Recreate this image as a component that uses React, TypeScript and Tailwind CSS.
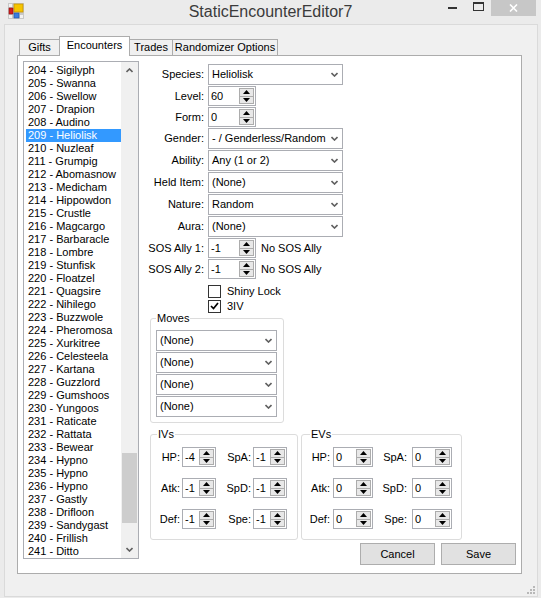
const species = [
  'Sigilyph', 'Swanna', 'Swellow', 'Drapion', 'Audino', 'Heliolisk', 'Nuzleaf', 'Grumpig',
  'Abomasnow', 'Medicham', 'Hippowdon', 'Crustle', 'Magcargo', 'Barbaracle', 'Lombre',
  'Stunfisk', 'Floatzel', 'Quagsire', 'Nihilego', 'Buzzwole', 'Pheromosa', 'Xurkitree',
  'Celesteela', 'Kartana', 'Guzzlord', 'Gumshoos', 'Yungoos', 'Raticate', 'Rattata',
  'Bewear', 'Hypno', 'Hypno', 'Hypno', 'Gastly', 'Drifloon', 'Sandygast', 'Frillish', 'Ditto',
];

function Chevron({ up = false }: { up?: boolean }) {
  return (
    <svg width="7" height="5" viewBox="0 0 7 5">
      <polyline
        points={up ? '0.5,4 3.5,1 6.5,4' : '0.5,1 3.5,4 6.5,1'}
        fill="none"
        stroke="#606060"
        strokeWidth="1.6"
      />
    </svg>
  );
}

function Spinner() {
  return (
    <div className="flex h-full w-[15px] flex-col border border-[#acacac] bg-[#e8e8e8]">
      <div className="flex flex-1 items-center justify-center border-b border-[#acacac]">
        <svg width="7" height="4" viewBox="0 0 7 4">
          <path d="M3.5 0 L7 4 L0 4 Z" fill="#000" />
        </svg>
      </div>
      <div className="flex flex-1 items-center justify-center">
        <svg width="7" height="4" viewBox="0 0 7 4">
          <path d="M0 0 L7 0 L3.5 4 Z" fill="#000" />
        </svg>
      </div>
    </div>
  );
}

function NumBox({ value, w }: { value: string; w: string }) {
  return (
    <div className={`flex h-[20px] ${w} border border-[#abadb3] bg-white`}>
      <span className="flex-1 pl-[2px] leading-[18px]">{value}</span>
      <div className="py-[1px] pr-[1px]">
        <Spinner />
      </div>
    </div>
  );
}

function Combo({ text, w = 'w-[135px]' }: { text: string; w?: string }) {
  return (
    <div className={`flex h-[21px] ${w} items-center border border-[#abadb3] bg-white pl-[3px] pr-[4px]`}>
      <span className="flex-1 whitespace-nowrap">{text}</span>
      <Chevron />
    </div>
  );
}

function Field({ label, h = 'h-[22px]', children }: { label: string; h?: string; children: React.ReactNode }) {
  return (
    <div className={`flex ${h} items-start`}>
      <div className="flex w-[58px] shrink-0 justify-end whitespace-nowrap pr-[4px] leading-[21px]">
        <span>{label}</span>
      </div>
      {children}
    </div>
  );
}

function Check({ label, checked }: { label: string; checked: boolean }) {
  return (
    <div className="flex h-[14px] items-center pl-[58px]">
      <div className="flex h-[13px] w-[13px] items-center justify-center border border-[#333] bg-white">
        {checked && (
          <svg width="9" height="8" viewBox="0 0 9 8">
            <path d="M1 4 L3.5 6.5 L8 1" fill="none" stroke="#000" strokeWidth="1.7" />
          </svg>
        )}
      </div>
      <span className="ml-[6px]">{label}</span>
    </div>
  );
}

function Stat({ label, value, lw, bw, pr }: { label: string; value: string; lw: string; bw: string; pr: string }) {
  return (
    <div className="flex items-center">
      <span className={`${lw} ${pr} text-right`}>{label}</span>
      <NumBox value={value} w={bw} />
    </div>
  );
}

function StatGroup({ title, values, kind }: { title: string; values: string[]; kind: 'iv' | 'ev' }) {
  const iv = kind === 'iv';
  const bw = iv ? 'w-[34px]' : 'w-[40px]';
  const l1 = 'w-[31px]';
  const l2 = iv ? 'w-[37px]' : 'w-[39px]';
  const p1 = iv ? 'pr-[2px]' : 'pr-[3px]';
  const p2 = iv ? 'pr-[2px]' : 'pr-[5px]';
  const rows = [
    ['HP:', 'SpA:'],
    ['Atk:', 'SpD:'],
    ['Def:', 'Spe:'],
  ];
  return (
    <fieldset
      className={`rounded-[3px] border border-[#dcdcdc] pt-[6px] pb-[10px] ${iv ? 'w-[148px] pr-[10px]' : 'ml-[3px] w-[161px] pr-[8px]'}`}
    >
      <legend className={`px-[1px] leading-[13px] ${iv ? 'ml-[6px]' : 'ml-[8px]'}`}>{title}</legend>
      <div className="flex flex-col gap-[11px]">
        {rows.map((r, i) => (
          <div key={i} className="flex">
            <Stat label={r[0]} value={values[i * 2]} lw={l1} bw={bw} pr={p1} />
            <Stat label={r[1]} value={values[i * 2 + 1]} lw={l2} bw={bw} pr={p2} />
          </div>
        ))}
      </div>
    </fieldset>
  );
}

function ListBox() {
  return (
    <div className="ml-[5px] mt-[5px] flex h-[498px] w-[116px] border border-[#abadb3] bg-white">
      <div className="flex-1 overflow-hidden pl-[2px] pt-[2px]">
        {species.map((name, i) => {
          const selected = i === 5;
          return (
            <div
              key={i}
              className={`h-[13px] whitespace-nowrap pl-[2px] leading-[13px] ${selected ? 'bg-[#3399ff] text-white' : ''}`}
            >
              {204 + i} - {name}
            </div>
          );
        })}
      </div>
      <div className="flex w-[17px] flex-col bg-[#f0f0f0]">
        <div className="flex h-[17px] items-center justify-center">
          <Chevron up />
        </div>
        <div className="flex-1 px-[1px]">
          <div className="mt-[374px] h-[70px] bg-[#cdcdcd]" />
        </div>
        <div className="flex h-[17px] items-center justify-center">
          <Chevron />
        </div>
      </div>
    </div>
  );
}

function TitleBar() {
  return (
    <div className="grid h-[24px] grid-cols-[1fr_auto_1fr]">
      <div className="pl-[8px] pt-[3px]">
        <svg width="16" height="16" viewBox="0 0 16 16">
          <rect x="0" y="0" width="16" height="16" fill="#c8c8c8" />
          <rect x="1" y="1" width="3" height="3" fill="#f2f2f2" />
          <rect x="1" y="12" width="3" height="3" fill="#f2f2f2" />
          <rect x="12" y="12" width="3" height="3" fill="#f2f2f2" />
          <rect x="6" y="1" width="9" height="8" fill="#f5c400" stroke="#c89400" strokeWidth="0.8" />
          <rect x="1" y="5" width="4" height="6" fill="#d21f1f" stroke="#8c1010" strokeWidth="0.6" />
          <rect x="6" y="10" width="5" height="5" fill="#3a7de0" stroke="#1d4fa0" strokeWidth="0.6" />
        </svg>
      </div>
      <div className="pt-[2px] text-[16px] leading-[20px] text-[#3b3b3b]">StaticEncounterEditor7</div>
      <div className="flex justify-end pr-[5px]">
        <div className="flex h-[16px] w-[26px] items-start justify-center pt-[7px]">
          <div className="h-[2px] w-[9px] bg-[#333]" />
        </div>
        <div className="flex h-[16px] w-[26px] items-start justify-center pt-[2px]">
          <div className="h-[9px] w-[11px] border border-t-2 border-[#333]" />
        </div>
        <div className="flex h-[16px] w-[45px] items-center justify-center bg-[#c7c7c7]">
          <svg width="9" height="8" viewBox="0 0 9 8">
            <path d="M1 0.5 L8 7.5 M8 0.5 L1 7.5" stroke="#fff" strokeWidth="1.6" />
          </svg>
        </div>
      </div>
    </div>
  );
}

function Tab({ label, w, selected, first }: { label: string; w: string; selected?: boolean; first?: boolean }) {
  return (
    <div
      className={`flex ${w} items-center justify-center whitespace-nowrap border border-b-0 border-[#acacac] ${first ? '' : '-ml-[1px]'} ${
        selected ? 'relative z-10 -mb-[1px] h-[20px] bg-white pb-[3px]' : 'h-[16px] bg-[#f0f0f0]'
      }`}
    >
      {label}
    </div>
  );
}

export default function App() {
  return (
    <div className="h-[598px] w-[541px] bg-[#ebebeb] font-['Liberation_Sans',Arial,sans-serif] text-[11px] text-black">
      <TitleBar />
      <div className="relative ml-[4px] h-[573px] w-[534px] border border-[#dadada] bg-[#f0f0f0]">
        <div className="ml-[12px] mt-[11px]">
          <div className="flex h-[19px] items-end pl-[2px]">
            <Tab label="Gifts" w="w-[41px]" first />
            <Tab label="Encounters" w="w-[71px]" selected />
            <Tab label="Trades" w="w-[44px]" />
            <Tab label="Randomizer Options" w="w-[106px]" />
          </div>
          <div className="flex h-[519px] w-[505px] items-start border border-[#acacac] bg-white">
            <ListBox />
            <div className="ml-[11px] mt-[8px] flex w-[366px] flex-col">
              <Field label="Species:">
                <Combo text="Heliolisk" />
              </Field>
              <Field label="Level:" h="h-[21px]">
                <NumBox value="60" w="w-[48px]" />
              </Field>
              <Field label="Form:" h="h-[21px]">
                <NumBox value="0" w="w-[48px]" />
              </Field>
              <Field label="Gender:">
                <Combo text="- / Genderless/Random" />
              </Field>
              <Field label="Ability:">
                <Combo text="Any (1 or 2)" />
              </Field>
              <Field label="Held Item:">
                <Combo text="(None)" />
              </Field>
              <Field label="Nature:">
                <Combo text="Random" />
              </Field>
              <Field label="Aura:">
                <Combo text="(None)" />
              </Field>
              <Field label="SOS Ally 1:" h="h-[21px]">
                <NumBox value="-1" w="w-[48px]" />
                <span className="ml-[5px] leading-[21px]">No SOS Ally</span>
              </Field>
              <Field label="SOS Ally 2:" h="h-[21px]">
                <NumBox value="-1" w="w-[48px]" />
                <span className="ml-[5px] leading-[21px]">No SOS Ally</span>
              </Field>
              <div className="mt-[4px] flex flex-col gap-[1px]">
                <Check label="Shiny Lock" checked={false} />
                <Check label="3IV" checked />
              </div>
              <fieldset className="-mt-[1px] w-[134px] rounded-[3px] border border-[#dcdcdc] pb-[5px] pl-[5px] pr-[6px] pt-[5px]">
                <legend className="px-[1px] leading-[13px]">Moves</legend>
                <div className="flex flex-col gap-[1px]">
                  <Combo text="(None)" w="w-[121px]" />
                  <Combo text="(None)" w="w-[121px]" />
                  <Combo text="(None)" w="w-[121px]" />
                  <Combo text="(None)" w="w-[121px]" />
                </div>
              </fieldset>
              <div className="mt-[5px] flex">
                <StatGroup title="IVs" kind="iv" values={['-4', '-1', '-1', '-1', '-1', '-1']} />
                <StatGroup title="EVs" kind="ev" values={['0', '0', '0', '0', '0', '0']} />
              </div>
              <div className="mt-[3px] flex justify-end gap-[6px]">
                <button className="h-[22px] w-[75px] border border-[#adadad] bg-[#e1e1e1]">Cancel</button>
                <button className="h-[22px] w-[75px] border border-[#adadad] bg-[#e1e1e1]">Save</button>
              </div>
            </div>
          </div>
        </div>
        <svg className="absolute bottom-[2px] right-[2px]" width="8" height="8" viewBox="0 0 8 8">
          <rect x="6" y="0" width="2" height="2" fill="#b8b8b8" />
          <rect x="3" y="3" width="2" height="2" fill="#b8b8b8" />
          <rect x="6" y="3" width="2" height="2" fill="#b8b8b8" />
          <rect x="0" y="6" width="2" height="2" fill="#b8b8b8" />
          <rect x="3" y="6" width="2" height="2" fill="#b8b8b8" />
          <rect x="6" y="6" width="2" height="2" fill="#b8b8b8" />
        </svg>
      </div>
    </div>
  );
}
